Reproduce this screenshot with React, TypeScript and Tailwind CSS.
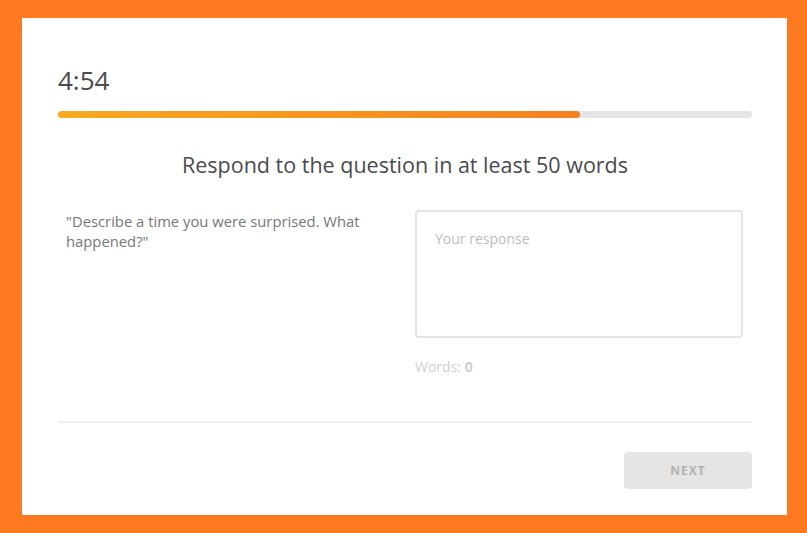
export default function App() {
  return (
    <div className="min-h-[533px] w-full bg-[#fd7a20] pl-[22px] pr-[20px] pt-[18px] pb-[18px] font-['Open_Sans','Lato',sans-serif]">
      <div className="h-[497px] bg-white pl-[36px] pr-[35px] pt-[47px] flex flex-col">
        {/* Timer */}
        <div className="text-[26px] leading-[30px] text-[#4b4b4b]">4:54</div>

        {/* Progress */}
        <div className="mt-[16px] h-[7px] w-full rounded-full bg-[#e5e5e5]">
          <div className="h-full w-[75.2%] rounded-full bg-gradient-to-r from-[#f9aa22] to-[#f5801f]" />
        </div>

        <h1 className="mt-[34px] text-center text-[21.5px] leading-[26px] text-[#4b4b4b]">
          Respond to the question in at least 50 words
        </h1>

        <div className="mt-[32px] flex">
          <div className="w-[357px] pl-[8px] pt-[1px] pr-[20px] text-[14.8px] leading-[20px] text-[#777777]">
            "Describe a time you were surprised. What happened?"
          </div>
          <div className="flex flex-col">
            <div className="h-[128px] w-[328px] rounded-[4px] border-2 border-[#e5e5e5] px-[18px] pt-[16px] text-[14px] text-[#bdbdbd]">
              Your response
            </div>
            <div className="mt-[18px] text-[14px] text-[#cfcfcf]">
              Words: <span className="font-bold">0</span>
            </div>
          </div>
        </div>

        <div className="mt-[44px] h-[2px] w-full bg-[#f0f0f0]" />

        <div className="mt-[29px] flex justify-end">
          <button className="h-[37px] w-[128px] rounded-[4px] bg-[#e5e5e5] text-[12px] font-bold tracking-[0.08em] text-[#b1b1b1]">
            NEXT
          </button>
        </div>
      </div>
    </div>
  );
}
